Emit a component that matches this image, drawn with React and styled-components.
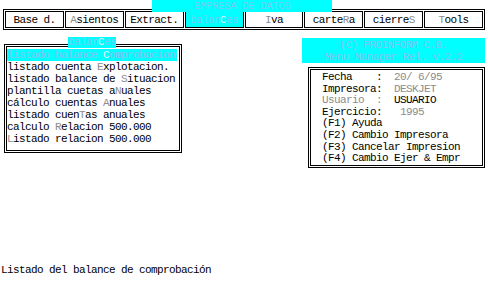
import React from 'react'
import styled, { createGlobalStyle } from 'styled-components'

const CYAN = '#00ffff'
const LIGHT = '#7cc8f4'
const DIM = '#8c8c8c'

const GlobalStyle = createGlobalStyle`
  html, body {
    margin: 0;
    padding: 0;
    background: #ffffff;
  }
`

const Screen = styled.div`
  position: relative;
  width: 488px;
  height: 291px;
  display: flex;
  flex-direction: column;
  background: #ffffff;
  color: #000000;
  font-family: 'Liberation Mono', 'DejaVu Sans Mono', monospace;
  font-size: 11px;
  letter-spacing: -0.6px;
  line-height: 12px;
  white-space: pre;
  overflow: hidden;
`

const CompanyTitle = styled.div`
  position: absolute;
  top: 0;
  left: 152px;
  width: 180px;
  height: 12px;
  background: ${CYAN};
  color: ${LIGHT};
  text-align: center;
  line-height: 12px;
`

const MenuBar = styled.nav`
  display: flex;
  gap: 1px;
  margin: 9px 3px 0 3px;
  padding: 1px;
  border: 1px solid #000;
`

const MenuButton = styled.div`
  flex: 1;
  height: 17px;
  box-sizing: border-box;
  border: 1px solid #000;
  display: flex;
  align-items: center;
  justify-content: center;
  background: ${p => (p.$active ? CYAN : '#ffffff')};
  color: ${p => (p.$active ? LIGHT : '#000')};
`

const Hot = styled.span`
  color: ${p => (p.$active ? '#dff4ff' : DIM)};
`

const Main = styled.div`
  display: flex;
  align-items: flex-start;
  margin-top: 8px;
`

const MenuPanel = styled.section`
  position: relative;
  width: 178px;
  box-sizing: border-box;
  margin: 6px 0 0 4px;
  padding: 1px;
  border: 1px solid #000;
`

const PanelTab = styled.div`
  position: absolute;
  top: -8px;
  left: 63px;
  height: 11px;
  line-height: 11px;
  background: ${CYAN};
  color: ${LIGHT};
`

const PanelInner = styled.div`
  border: 1px solid #000;
  padding: 2px 2px 5px 0;
`

const PanelRow = styled.div`
  height: 12px;
  line-height: 12px;
  background: ${p => (p.$active ? CYAN : 'transparent')};
  color: ${p => (p.$active ? LIGHT : '#000')};
`

const SideColumn = styled.div`
  margin-left: auto;
  margin-right: 3px;
  width: 183px;
  display: flex;
  flex-direction: column;
`

const Credits = styled.div`
  height: 25px;
  box-sizing: border-box;
  padding-top: 1px;
  background: ${CYAN};
  color: ${LIGHT};
  text-align: center;
`

const InfoBox = styled.section`
  margin: 4px 0 0 6px;
  padding: 1px;
  border: 1px solid #000;
`

const InfoInner = styled.div`
  border: 1px solid #000;
  padding: 2px 0 0 11px;
`

const InfoRow = styled.div`
  height: 11.6px;
  line-height: 11.6px;
`

const Dim = styled.span`
  color: ${DIM};
`

const StatusLine = styled.footer`
  margin-top: auto;
  padding: 0 0 15px 1px;
  height: 12px;
`

const menuItems = ['Base d.', '[A]sientos', 'Extract.', 'balan[C]es', '[I]va', 'carte[R]a', 'cierre[S]', '[T]ools']

const panelItems = [
  'listado balance [C]omprobacion',
  'listado cuenta [E]xplotacion.',
  'listado balance de [S]ituacion',
  'plantilla cuetas a[N]uales',
  'cálculo cuentas [A]nuales',
  'listado cuen[T]as anuales',
  'calculo [R]elacion 500.000',
  '[L]istado relacion 500.000',
]

// "abc[D]ef" -> hot key letter in its own span
const Label = ({ text, active }) => {
  const m = text.match(/^(.*)\[(.)\](.*)$/)
  if (!m) return <span>{text}</span>
  return (
    <span>
      {m[1]}
      <Hot $active={active}>{m[2]}</Hot>
      {m[3]}
    </span>
  )
}

export default function App() {
  return (
    <>
      <GlobalStyle />
      <Screen>
        <CompanyTitle>EMPRESA DE DATOS</CompanyTitle>

        <MenuBar>
          {menuItems.map((item, i) => (
            <MenuButton key={item} $active={i === 3}>
              <Label text={item} active={i === 3} />
            </MenuButton>
          ))}
        </MenuBar>

        <Main>
          <MenuPanel>
            <PanelTab>
              <Label text="balan[C]es" active />
            </PanelTab>
            <PanelInner>
              {panelItems.map((item, i) => (
                <PanelRow key={item} $active={i === 0}>
                  <Label text={item} active={i === 0} />
                </PanelRow>
              ))}
            </PanelInner>
          </MenuPanel>

          <SideColumn>
            <Credits>
              <div>(C) PROINFORM C.B.</div>
              <div>Menu Manager Rel. v.2.2</div>
            </Credits>
            <InfoBox>
              <InfoInner>
                <InfoRow>Fecha    :  <Dim>20/ 6/95</Dim></InfoRow>
                <InfoRow>Impresora:  <Dim>DESKJET</Dim></InfoRow>
                <InfoRow><Dim>Usuario  :</Dim>  USUARIO</InfoRow>
                <InfoRow>Ejercicio:   <Dim>1995</Dim></InfoRow>
                <InfoRow>(F1) Ayuda</InfoRow>
                <InfoRow>(F2) Cambio Impresora</InfoRow>
                <InfoRow>(F3) Cancelar Impresion</InfoRow>
                <InfoRow>(F4) Cambio Ejer &amp; Empr</InfoRow>
              </InfoInner>
            </InfoBox>
          </SideColumn>
        </Main>

        <StatusLine>Listado del balance de comprobación</StatusLine>
      </Screen>
    </>
  )
}
